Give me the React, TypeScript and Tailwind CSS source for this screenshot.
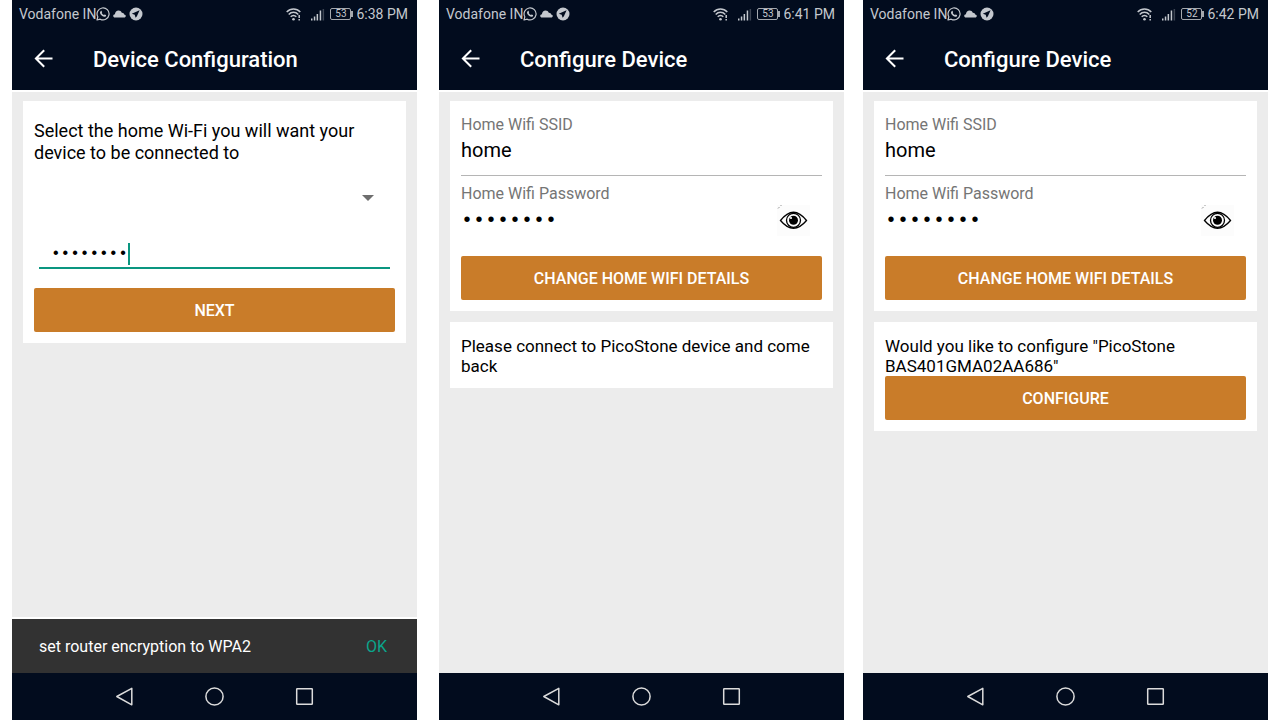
import { useId, type ReactNode } from 'react';

function StatusIcons() {
  return (
    <div className="flex items-center gap-[3px]">
      <svg viewBox="0 0 14 14" className="h-[14px] w-[14px]" fill="none" stroke="currentColor">
        <path d="M1 13l.8-3.200A6 6 0 1 1 4.200 12.200z" strokeWidth="1.200" strokeLinejoin="round" />
        <path
          d="M4.900 3.900c.4-.2.7 0 .8.3l.4 1c.1.3-.4.700-.4.900.5 1 1.200 1.600 2.200 2 .3 0 .600-.700.9-.600l1.100.5c.4.2.2 1-.2 1.400-.6.5-1.400.5-2.300.1C5.700 8.800 4.500 7.500 4.100 6.200c-.2-.9 0-1.900.8-2.300z"
          fill="currentColor"
          stroke="none"
        />
      </svg>
      <svg viewBox="0 0 13 8" className="h-[8px] w-[13px]" fill="currentColor">
        <path d="M2 7.500C.9 7.500.2 6.900.2 6c0-1 .7-1.600 1.700-1.700C2.100 2 3.600.5 5.600.5c1.500 0 2.600.8 3.200 2.200 1.300-.1 2.200.6 2.400 1.800 1 .1 1.600.7 1.600 1.500 0 .9-.7 1.500-1.700 1.500z" />
      </svg>
      <svg viewBox="0 0 14 14" className="h-[14px] w-[14px]">
        <circle cx="7" cy="7" r="6.500" fill="currentColor" />
        <path d="M10.600 3.300L2.800 6.700l2.900 1.100.9 3 1.300-1.500z" fill="#020c1e" />
      </svg>
    </div>
  );
}

function WifiIcon() {
  return (
    <svg viewBox="0 0 15 13" className="h-[13px] w-[15px]" fill="none" stroke="currentColor" strokeWidth="1.500">
      <path d="M.7 4C4.600 0 10.400 0 14.300 4" />
      <path d="M2.700 6.400c2.700-2.900 6.900-2.900 9.600 0" />
      <path d="M4.700 8.800c1.600-1.700 4-1.700 5.600 0" />
      <circle cx="7.500" cy="11.200" r="1.300" fill="currentColor" stroke="none" />
      <path d="M13.200 7v3M13.200 11v1.500" />
    </svg>
  );
}

function SignalIcon() {
  return (
    <svg viewBox="0 0 14 13" className="h-[13px] w-[14px]" fill="currentColor">
      <rect x="0" y="10.500" width="1.500" height="2" />
      <rect x="2.800" y="8.500" width="1.500" height="4" />
      <rect x="5.600" y="6" width="1.500" height="6.500" />
      <rect x="8.700" y="2.500" width="1.500" height="10" />
      <rect x="11.600" y="1" width="1.500" height="11.500" opacity=".3" />
    </svg>
  );
}

function EyeIcon() {
  return (
    <svg viewBox="0 0 36 32" className="h-8 w-9" fill="none" stroke="#000">
      <rect x="1" y="1" width="33" height="31" fill="#fcfcfc" stroke="none" />
      <path d="M2 4.500l1.500-1.500M4.500 2l1-1" stroke="#999" />
      <path d="M4.500 16.500Q17.500 0 30.500 16.500Q17.500 32 4.500 16.500z" strokeWidth="1.300" />
      <circle cx="17.500" cy="16.300" r="7" strokeWidth="1.300" />
      <circle cx="17.500" cy="16.300" r="4.500" fill="#000" stroke="none" />
      <circle cx="15" cy="14" r="1.100" fill="#fff" stroke="none" />
    </svg>
  );
}

function NavBar() {
  return (
    <nav className="flex h-[47px] items-center justify-center gap-[70px] bg-[#020c1e] text-[#dcdcdc]">
      <button aria-label="Back">
        <svg viewBox="0 0 20 20" className="h-5 w-5" fill="none" stroke="currentColor" strokeWidth="1.500" strokeLinejoin="round">
          <path d="M16.800 1.300v16.500L1.800 9.500z" />
        </svg>
      </button>
      <button aria-label="Home">
        <svg viewBox="0 0 20 20" className="h-5 w-5" fill="none" stroke="currentColor" strokeWidth="1.500">
          <circle cx="9.500" cy="9.500" r="8.600" />
        </svg>
      </button>
      <button aria-label="Recent apps">
        <svg viewBox="0 0 20 20" className="h-5 w-5" fill="none" stroke="currentColor" strokeWidth="1.500">
          <rect x="1.700" y="1.700" width="15.600" height="15.600" rx=".6" />
        </svg>
      </button>
    </nav>
  );
}

type PhoneProps = {
  title: string;
  time: string;
  battery: number;
  snackbar?: ReactNode;
  children: ReactNode;
};

function Phone({ title, time, battery, snackbar, children }: PhoneProps) {
  return (
    <section className="flex min-w-0 flex-1 flex-col bg-[#ececec]">
      <header className="border-b-2 border-white bg-[#020c1e]">
        <div className="flex h-7 items-center justify-between pr-[9px] pl-[7px] text-sm text-[#c4c8ce]">
          <div className="flex items-center">
            <span>Vodafone IN</span>
            <StatusIcons />
          </div>
          <div className="flex items-center">
            <WifiIcon />
            <span className="ml-[10px]">
              <SignalIcon />
            </span>
            <span className="ml-[5px] flex h-3 w-[21px] items-center justify-center rounded-xs border border-[#a4a8ae] text-[10px] leading-none">
              {battery}
            </span>
            <span className="h-[6px] w-[2px] bg-[#a4a8ae]" />
            <span className="ml-[3px]">{time}</span>
          </div>
        </div>
        <div className="flex h-[62px] items-center gap-[39px] pl-[22px] text-white">
          <button aria-label="Navigate up">
            <svg viewBox="0 0 20 20" className="h-5 w-5" fill="none" stroke="currentColor" strokeWidth="2">
              <path d="M18.500 9.500H2.500M10.200 1.200L1.900 9.500l8.300 8.300" />
            </svg>
          </button>
          <h1 className="text-[22px] font-medium">{title}</h1>
        </div>
      </header>
      <main className="flex flex-1 flex-col gap-[11px] px-[11px] pt-[9px]">{children}</main>
      {snackbar}
      <NavBar />
    </section>
  );
}

function Button({ children }: { children: ReactNode }) {
  return (
    <button className="h-11 w-full rounded-xs bg-[#c97c29] pt-[2px] text-base font-medium text-white uppercase">
      {children}
    </button>
  );
}

function WifiDetails() {
  const id = useId();
  return (
    <div className="flex flex-col bg-white px-[11px] pt-[14px] pb-[11px]">
      <label htmlFor={`${id}-ssid`} className="text-base leading-5 text-[#757575]">
        Home Wifi SSID
      </label>
      <input
        id={`${id}-ssid`}
        defaultValue="home"
        className="h-[41px] w-full border-b border-[#b5b5b5] pb-[11px] text-xl text-black outline-none"
      />
      <label htmlFor={`${id}-password`} className="mt-2 text-base leading-5 text-[#757575]">
        Home Wifi Password
      </label>
      <div className="flex items-center pr-[10px]">
        <input
          id={`${id}-password`}
          type="password"
          defaultValue="password"
          className="h-8 min-w-0 flex-1 font-['Liberation_Mono',monospace] text-xl text-black outline-none"
        />
        <button aria-label="Show password">
          <EyeIcon />
        </button>
      </div>
      <div className="mt-5">
        <Button>Change Home Wifi Details</Button>
      </div>
    </div>
  );
}

export default function App() {
  return (
    <div className="flex min-h-screen gap-[19px] bg-white px-3 font-['Roboto',sans-serif]">
      <Phone
        title="Device Configuration"
        time="6:38 PM"
        battery={53}
        snackbar={
          <div className="flex h-14 items-center justify-between border-t-2 border-white bg-[#323232] px-[27px] pt-px text-base">
            <span className="text-white">set router encryption to WPA2</span>
            <button className="mr-[3px] text-[#0aa58c]">OK</button>
          </div>
        }
      >
        <div className="bg-white px-[11px] pt-[19px] pb-[11px]">
          <label htmlFor="network" className="block text-lg leading-[22px] text-black">
            Select the home Wi-Fi you will want your device to be connected to
          </label>
          <div className="mt-3 flex items-center">
            <select id="network" className="h-11 w-full appearance-none outline-none">
              <option value=""></option>
            </select>
            <svg viewBox="0 0 12 6" className="mr-[21px] h-[6px] w-3 shrink-0" fill="#6e6e6e">
              <path d="M0 0h12L6 6z" />
            </svg>
          </div>
          <div className="mx-[5px] mt-5 mb-[19px] flex h-[29px] items-center border-b-2 border-[#0a9680] pl-3">
            <input
              type="password"
              aria-label="Wi-Fi password"
              defaultValue="password"
              className="field-sizing-content font-['Liberation_Mono',monospace] text-base text-black outline-none"
            />
            <span className="h-[22px] w-[2px] bg-[#0a9680]" />
          </div>
          <Button>Next</Button>
        </div>
      </Phone>

      <div className="ml-[3px] flex min-w-0 flex-1">
        <Phone title="Configure Device" time="6:41 PM" battery={53}>
          <WifiDetails />
          <div className="bg-white px-[11px] pt-[14px] pb-3">
            <p className="text-[17px] leading-5 text-black">Please connect to PicoStone device and come back</p>
          </div>
        </Phone>
      </div>

      <Phone title="Configure Device" time="6:42 PM" battery={52}>
        <WifiDetails />
        <div className="bg-white px-[11px] pt-[14px] pb-[11px]">
          <p className="text-[17px] leading-5 text-black">
            Would you like to configure "PicoStone BAS401GMA02AA686"
          </p>
          <Button>Configure</Button>
        </div>
      </Phone>
    </div>
  );
}
